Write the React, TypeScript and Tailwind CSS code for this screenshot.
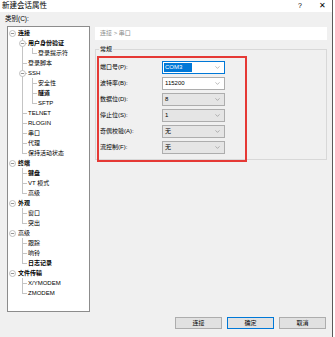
import React from 'react';
import { ChevronDown } from 'lucide-react';

type Node = { level: number; label: string; bold?: boolean; expander?: boolean };

const tree: Node[] = [
  { level: 0, label: '连接', bold: true, expander: true },
  { level: 1, label: '用户身份验证', bold: true, expander: true },
  { level: 2, label: '登录提示符' },
  { level: 1, label: '登录脚本' },
  { level: 1, label: 'SSH', expander: true },
  { level: 2, label: '安全性' },
  { level: 2, label: '隧道', bold: true },
  { level: 2, label: 'SFTP' },
  { level: 1, label: 'TELNET' },
  { level: 1, label: 'RLOGIN' },
  { level: 1, label: '串口' },
  { level: 1, label: '代理' },
  { level: 1, label: '保持活动状态' },
  { level: 0, label: '终端', bold: true, expander: true },
  { level: 1, label: '键盘', bold: true },
  { level: 1, label: 'VT 模式' },
  { level: 1, label: '高级' },
  { level: 0, label: '外观', bold: true, expander: true },
  { level: 1, label: '窗口' },
  { level: 1, label: '突出' },
  { level: 0, label: '高级', expander: true },
  { level: 1, label: '跟踪' },
  { level: 1, label: '响铃' },
  { level: 1, label: '日志记录', bold: true },
  { level: 0, label: '文件传输', bold: true, expander: true },
  { level: 1, label: 'X/YMODEM' },
  { level: 1, label: 'ZMODEM' },
];

// does row i have a later sibling at its own level
const hasNext = (i: number) => {
  const lv = tree[i].level;
  for (let j = i + 1; j < tree.length; j++) {
    if (tree[j].level < lv) return false;
    if (tree[j].level === lv) return true;
  }
  return false;
};

// ancestor of row i at level k
const ancestor = (i: number, k: number) => {
  for (let j = i; j >= 0; j--) if (tree[j].level === k) return j;
  return -1;
};

const Expander = () => (
  <svg width="7" height="7" viewBox="0 0 7 7" className="relative z-10">
    <circle cx="3.5" cy="3.5" r="3" fill="#fff" stroke="#b0b0b0" strokeWidth="0.8" />
    <line x1="1.8" y1="3.5" x2="5.2" y2="3.5" stroke="#777" strokeWidth="0.8" />
  </svg>
);

const TreeRow = ({ node, i }: { node: Node; i: number }) => {
  const cells = [];
  for (let k = 0; k <= node.level; k++) {
    const own = k === node.level;
    let vertical: 'none' | 'full' | 'half' = 'none';
    if (k > 0) {
      if (own) vertical = hasNext(i) ? 'full' : 'half';
      else vertical = hasNext(ancestor(i, k)) ? 'full' : 'none';
    }
    cells.push(
      <div key={k} className="relative w-[10px] h-[10px] flex items-center justify-center shrink-0">
        {vertical === 'full' && <div className="absolute left-[5px] top-0 w-px h-[10px] bg-[#c4c4c4]" />}
        {vertical === 'half' && <div className="absolute left-[5px] top-0 w-px h-[5px] bg-[#c4c4c4]" />}
        {own && k > 0 && <div className="absolute left-[5px] top-[5px] w-[5px] h-px bg-[#c4c4c4]" />}
        {own && node.expander && <Expander />}
      </div>
    );
  }
  return (
    <div className="flex items-center h-[10px] leading-[10px] -ml-[1px]">
      {cells}
      <span className={`pl-[1px] whitespace-nowrap ${node.bold ? 'font-bold' : ''}`}>{node.label}</span>
    </div>
  );
};

const fields = [
  { label: '端口号(P):', value: 'COM3', editable: true, selected: true },
  { label: '波特率(B):', value: '115200', editable: true },
  { label: '数据位(D):', value: '8' },
  { label: '停止位(S):', value: '1' },
  { label: '奇偶校验(A):', value: '无' },
  { label: '流控制(F):', value: '无' },
];

const Button = ({ children, primary }: { children: React.ReactNode; primary?: boolean }) => (
  <button
    className={`h-[12px] w-[47px] bg-[#e1e1e1] text-[6px] leading-none flex items-center justify-center ${
      primary ? 'border-[1.5px] border-[#0078d7]' : 'border border-[#adadad]'
    }`}
  >
    {children}
  </button>
);

export default function App() {
  return (
    <div className="w-[335px] h-[337px] flex bg-white text-black text-[6px] font-['Liberation_Sans','Noto_Sans_CJK_SC',sans-serif] overflow-hidden">
      <div className="w-[332px] flex flex-col">
        {/* title bar */}
        <div className="h-[12px] bg-white flex items-center pl-[2px] text-[7.5px]">
          <span className="flex-1">新建会话属性</span>
          <span className="w-[8px] text-center mr-[14px] text-[7px]">?</span>
          <span className="w-[8px] text-center mr-[6px] text-[8px]">✕</span>
        </div>

        <div className="flex-1 bg-[#f0f0f0] flex flex-col">
          <div className="h-[14px] pl-[5px] flex items-center text-[6.5px]">类别(C):</div>

          <div className="flex h-[286px] pl-[7px]">
            {/* category tree */}
            <div className="w-[83px] h-full bg-white border border-[#8c8c8c] pt-px overflow-hidden">
              {tree.map((n, i) => (
                <TreeRow key={i} node={n} i={i} />
              ))}
            </div>

            {/* right panel */}
            <div className="ml-[5px] w-[232px] pt-px">
              <div className="h-[13px] bg-white flex items-center pl-[5px] text-[#8a8a8a]">连接 &gt; 串口</div>

              <fieldset className="mt-[5px] h-[115px] border border-[#d8d8d8] px-0 pb-0">
                <legend className="ml-[3px] px-[1px] leading-[8px]">常规</legend>
                <div className="mt-[3px] ml-px w-[150px] h-[106px] border-2 border-[#e53935] pt-[3px] pl-px flex flex-col gap-[3px]">
                  {fields.map((f) => (
                    <div key={f.label} className="flex items-center h-[13px]">
                      <span className="w-[62px] whitespace-nowrap">{f.label}</span>
                      <div
                        className={`w-[63px] h-[13px] flex items-center pl-px pr-[3px] border ${
                          f.selected ? 'border-[#0078d7]' : 'border-[#adadad]'
                        } ${f.editable ? 'bg-white' : 'bg-[#e5e5e5]'}`}
                      >
                        <span className="flex-1 leading-[9px]">
                          {f.selected ? (
                            <span className="inline-block w-[28px] bg-[#0078d7] text-white pl-px">{f.value}</span>
                          ) : (
                            <span className="pl-px">{f.value}</span>
                          )}
                        </span>
                        <ChevronDown size={7} strokeWidth={1.5} color="#666" />
                      </div>
                    </div>
                  ))}
                </div>
              </fieldset>
            </div>
          </div>

          <div className="mt-[5px] flex justify-end gap-[5px] pr-[6px]">
            <Button>连接</Button>
            <Button primary>确定</Button>
            <Button>取消</Button>
          </div>
        </div>
      </div>
      <div className="w-px h-full bg-[#5a5a5a]" />
      <div className="w-[2px] h-full bg-white" />
    </div>
  );
}
